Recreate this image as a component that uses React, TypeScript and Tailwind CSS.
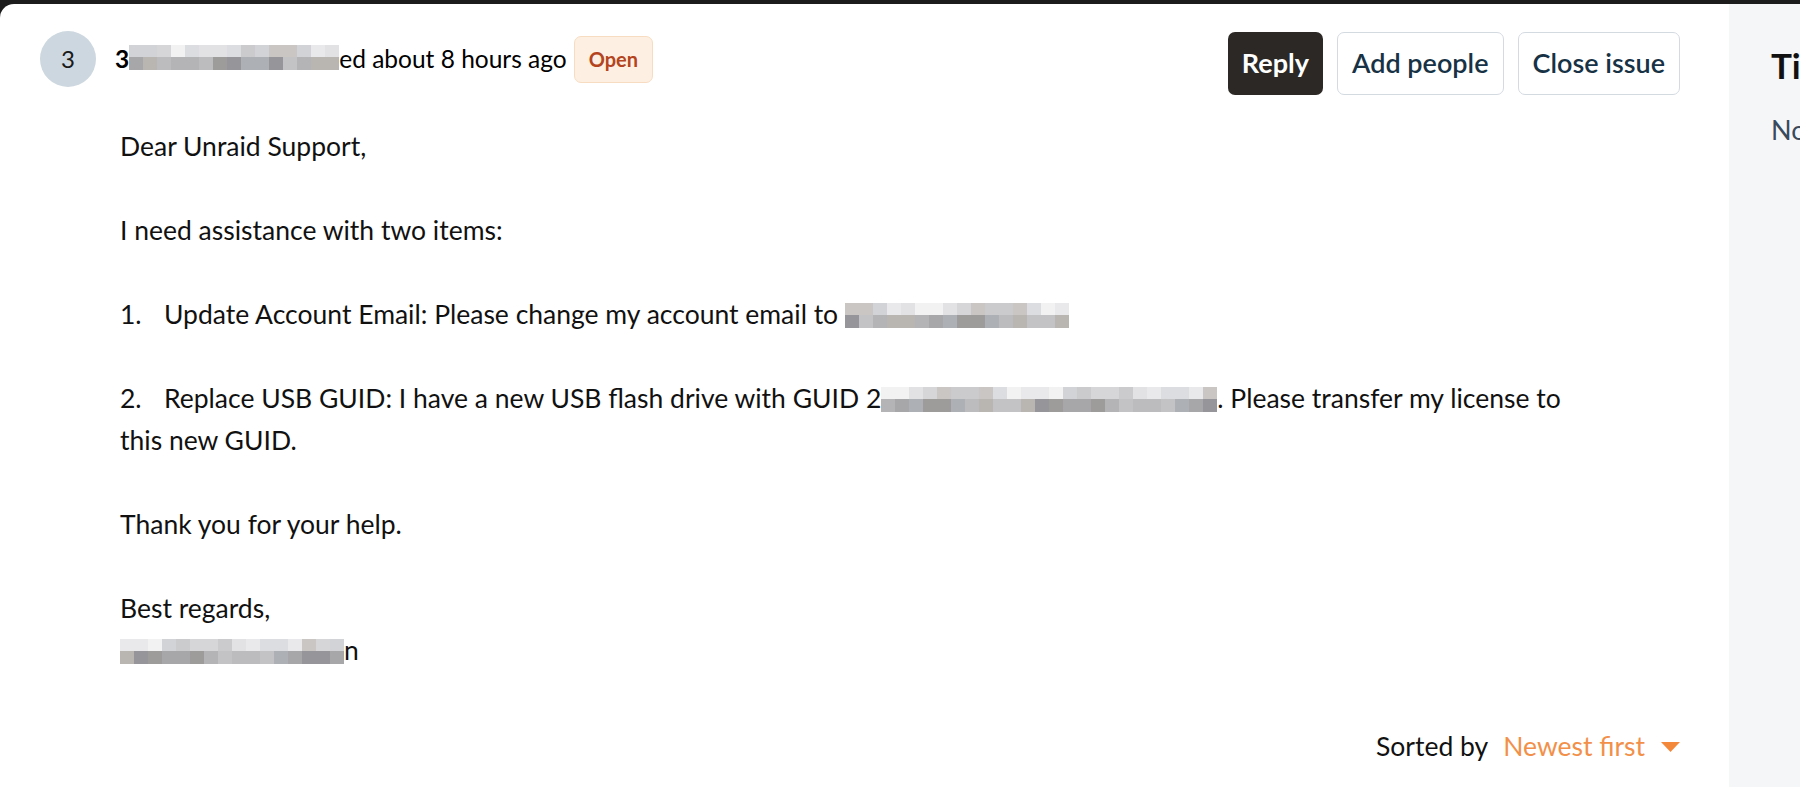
import React from "react";

const light = ["bg-[#d6d6d8]", "bg-[#e2e2e4]", "bg-[#cbcbcd]", "bg-[#dcdde0]", "bg-[#c9c6c3]", "bg-[#e9e9eb]", "bg-[#d1d3d6]", "bg-[#f2f2f3]"];
const dark = ["bg-[#a7a7a9]", "bg-[#b4b4b6]", "bg-[#9e9c9a]", "bg-[#bcbcbe]", "bg-[#adb0b4]", "bg-[#c3c3c5]", "bg-[#96959a]", "bg-[#b9b6b2]"];

const Mosaic = ({ cols, seed = 1 }: { cols: number; seed?: number }) => {
    const pick = (arr: string[], i: number) => arr[(i * 7 + seed * 3 + ((i * i) % 5)) % arr.length];
    return (
        <span className="inline-flex flex-col align-middle -mt-[4px]">
            <span className="flex">
                {Array.from({ length: cols }).map((_, i) => (
                    <span key={i} className={`w-[14px] h-[12px] ${pick(light, i)}`} />
                ))}
            </span>
            <span className="flex">
                {Array.from({ length: cols }).map((_, i) => (
                    <span key={i} className={`w-[14px] h-[13px] ${pick(dark, i + 2)}`} />
                ))}
            </span>
        </span>
    );
};

const Header = () => (
    <div className="flex items-start justify-between">
        <div className="flex items-center h-[56px] gap-[19px]">
            <div className="w-[56px] h-[56px] rounded-full bg-[#cdd7df] flex items-center justify-center text-[24px] text-[#1a1a1a]">
                3
            </div>
            <div className="flex items-center text-[24.5px] text-black">
                <span className="font-bold">3</span>
                <Mosaic cols={15} seed={2} />
                <span>ed about 8 hours ago</span>
                <span className="ml-[7px] h-[47px] px-[14px] flex items-center rounded-[7px] border border-[#f7dcc1] bg-[#fdf0e2] text-[20px] font-bold text-[#b4441d]">
                    Open
                </span>
            </div>
        </div>
        <div className="flex gap-[14px] mt-[1px] text-[27px]">
            <button className="h-[63px] px-[14px] rounded-[7px] bg-[#2b2825] text-white font-bold">
                Reply
            </button>
            <button className="h-[63px] px-[14px] rounded-[7px] border border-[#d3dae0] bg-white text-[#183245] font-semibold">
                Add people
            </button>
            <button className="h-[63px] px-[14px] rounded-[7px] border border-[#d3dae0] bg-white text-[#183245] font-semibold">
                Close issue
            </button>
        </div>
    </div>
);

const Body = () => (
    <div className="mt-[30px] pl-[80px] text-[26.5px] leading-[42px] text-[#111] flex flex-col gap-[42px]">
        <p>Dear Unraid Support,</p>
        <p>I need assistance with two items:</p>
        <p>
            <span className="inline-block w-[44px]">1.</span>
            Update Account Email: Please change my account email to <Mosaic cols={16} seed={4} />
        </p>
        <p>
            <span className="inline-block w-[44px]">2.</span>
            Replace USB GUID: I have a new USB flash drive with GUID 2<Mosaic cols={24} seed={5} />. Please transfer my license to
            <br />
            this new GUID.
        </p>
        <p>Thank you for your help.</p>
        <p>
            Best regards,
            <br />
            <Mosaic cols={16} seed={7} />n
        </p>
    </div>
);

export default function App() {
    return (
        <div className="w-full h-[787px] bg-[#1c1c1c] pt-[4px] overflow-hidden" style={{ fontFamily: "Lato, 'Noto Sans', sans-serif" }}>
            <div className="flex h-full bg-white rounded-tl-[14px] overflow-hidden">
                <main className="flex-1 pl-[40px] pr-[49px] pt-[27px]">
                    <Header />
                    <Body />
                    <div className="mt-[55px] h-[42px] flex items-center justify-end text-[26.5px]">
                        <span className="text-[#111]">Sorted by</span>
                        <span className="ml-[15px] text-[#f2904a]">Newest first</span>
                        <svg className="ml-[16px]" width="19" height="10" viewBox="0 0 19 10">
                            <path d="M0 0 H19 L9.5 10 Z" fill="#f4883a" />
                        </svg>
                    </div>
                </main>
                <aside className="w-[71px] shrink-0 bg-[#f5f6f8] pl-[42px] pt-[39px] whitespace-nowrap overflow-hidden">
                    <h2 className="text-[35px] leading-[44px] font-bold text-[#111]">Timeline</h2>
                    <p className="mt-[22px] text-[27px] leading-[42px] text-[#3a4a5c]">No activity yet</p>
                </aside>
            </div>
        </div>
    );
}
